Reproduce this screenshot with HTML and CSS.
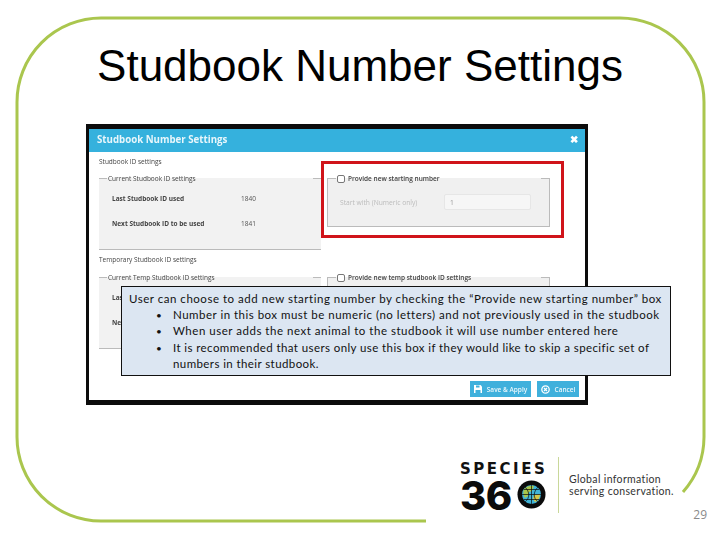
FILE: index.html
```html
<!DOCTYPE html>
<html lang="en">
<head>
<meta charset="utf-8">
<title>Studbook Number Settings</title>
<link rel="stylesheet" href="styles.css">
</head>
<body>
<main class="slide">
  <svg class="frame" width="720" height="540" viewBox="0 0 720 540" aria-hidden="true">
    <path d="M426 521H101A84 84 0 0 1 17 437V102A84 84 0 0 1 101 18H620A84 84 0 0 1 704 102V437A84 84 0 0 1 683 492" fill="none" stroke="#aac64e" stroke-width="3"/>
  </svg>
  <h1 class="title">Studbook Number Settings</h1>
  <section class="dialog">
    <header class="dialog-head"><span>Studbook Number Settings</span><span class="close">✖</span></header>
    <div class="dialog-body">
      <div class="sec-label">Studbook ID settings</div>
      <div class="sec-row">
        <div class="panel">
          <div class="legend"><i></i><span>Current Studbook ID settings</span><i></i></div>
          <div class="data"><b>Last Studbook ID used</b><span>1840</span><b>Next Studbook ID to be used</b><span>1841</span></div>
        </div>
        <div class="panel side">
          <div class="legend"><i></i><em class="check"></em><strong>Provide new starting number</strong><i></i></div>
          <div class="start"><span>Start with (Numeric only)</span><div class="input">1</div></div>
        </div>
      </div>
      <div class="sec-label second">Temporary Studbook ID settings</div>
      <div class="sec-row">
        <div class="panel">
          <div class="legend"><i></i><span>Current Temp Studbook ID settings</span><i></i></div>
          <div class="data"><b>Las</b><span></span><b>Nex</b><span></span></div>
        </div>
        <div class="panel side">
          <div class="legend"><i></i><em class="check"></em><strong>Provide new temp studbook ID settings</strong><i></i></div>
        </div>
      </div>
    </div>
    <div class="actions">
      <span class="btn save"><svg width="8" height="8" viewBox="0 0 8 8"><path d="M0 0h6.500L8 1.500V8H0z" fill="#fff"/><path d="M2 0.500h3.500v2H2zM1.500 5h5v3h-5z" fill="#3fb0dc"/></svg>Save &amp; Apply</span>
      <span class="btn cancel"><svg width="9" height="9" viewBox="0 0 9 9"><circle cx="4.500" cy="4.500" r="3.700" fill="none" stroke="#fff" stroke-width="1.300"/><path d="M3 3l3 3M6 3L3 6" stroke="#fff" stroke-width="1.200"/></svg>Cancel</span>
    </div>
    <div class="highlight"></div>
  </section>
  <aside class="callout">
    <p>User can choose to add new starting number by checking the “Provide new starting number” box</p>
    <ul>
      <li class="snug">Number in this box must be numeric (no letters) and not previously used in the studbook</li>
      <li>When user adds the next animal to the studbook it will use number entered here</li>
      <li class="tight">It is recommended that users only use this box if they would like to skip a specific set of numbers in their studbook.</li>
    </ul>
  </aside>
  <footer class="footer">
    <div class="logo">
      <div class="species">SPECIES</div>
      <div class="mark"><span>36</span>
        <svg width="29" height="29" viewBox="0 0 29 29" aria-hidden="true">
          <circle cx="14.500" cy="14.500" r="14" fill="#0b0b0b"/>
          <circle cx="14.500" cy="14.500" r="9.500" fill="#3fb4d8"/>
          <path d="M7 9c3-3 7-4 10-3l-2 5-3 1-1 4-3 2c-2-3-2-6-1-9z" fill="#a9c64a"/>
          <path d="M17 15l6-1c0 4-2 7-5 8l-2-3z" fill="#d5c94a"/>
          <path d="M5 14.500h19M14.500 5v19M8 7c5 5 5 11 0 15M21 7c-5 5-5 11 0 15M7 9.500h15M7 19.500h15" fill="none" stroke="#0b0b0b" stroke-width=".7"/>
        </svg>
      </div>
    </div>
    <div class="tagline">Global information<br>serving conservation.</div>
    <div class="page">29</div>
  </footer>
</main>
</body>
</html>
```

FILE: styles.css
```css
* { box-sizing: border-box; }
html, body { margin: 0; padding: 0; background: #fff; }
.slide {
  position: relative;
  width: 720px;
  height: 540px;
  overflow: hidden;
  font-family: "Liberation Sans", Arial, sans-serif;
  color: #000;
}
.frame { position: absolute; left: 0; top: 0; }
.title {
  position: relative;
  margin: 0;
  padding-top: 40px;
  height: 124px;
  font-size: 44px;
  line-height: 52px;
  font-weight: 400;
  text-align: center;
}
.dialog {
  position: relative;
  display: flex;
  flex-direction: column;
  width: 502px;
  height: 281px;
  margin-left: 86px;
  background: #fff;
  border: solid #0c0c0c;
  border-width: 5px 3px 5px 3px;
  font-family: "Open Sans", sans-serif;
  font-size: 6.500px;
  color: #444;
}
.dialog-head {
  display: flex;
  align-items: center;
  justify-content: space-between;
  height: 23px;
  padding: 0 7px 3px 8px;
  background: #35b1dd;
  color: #e8f6fb;
  font-size: 9.700px;
  font-weight: 700;
  filter: blur(.4px);
}
.close { font-size: 10px; color: #fff; }
.dialog-body { padding: 0 35px 0 10px; filter: blur(.45px); }
.sec-label { height: 26px; padding-top: 6px; line-height: 8px; }
.sec-label.second { height: 27px; }
.sec-row { display: grid; grid-template-columns: 222px 223px; column-gap: 6px; }
.panel { height: 72px; background: #f2f2f2; border-bottom: 1px solid #bbb; }
.legend {
  display: flex;
  align-items: center;
  justify-content: space-between;
  gap: 1px;
  height: 1px;
  white-space: nowrap;
}
.legend i { flex: 0 0 8px; height: 1px; background: #bbb; }
.legend span { margin-right: auto; line-height: 8px; }
.data {
  display: grid;
  grid-template-columns: 129px 1fr;
  grid-auto-rows: 25px;
  align-items: center;
  padding: 7px 0 0 13px;
  color: #555;
}
.data b { font-weight: 700; color: #444; white-space: nowrap; }
.side { height: 49px; border-left: 1px solid #bbb; border-right: 1px solid #bbb; background: #f0f0f0; }
.sec-row:last-child .side { height: 72px; }
.check {
  flex: none;
  width: 8px;
  height: 8px;
  margin-right: 2px;
  background: #fff;
  border: 1px solid #777;
  border-radius: 2px;
}
.legend strong { margin-right: auto; font-weight: 600; color: #444; }
.start {
  display: flex;
  align-items: center;
  justify-content: space-between;
  padding: 15px 18px 0 12px;
  color: #bbb;
  font-size: 6.700px;
}
.input {
  width: 87px;
  height: 16px;
  padding-left: 5px;
  line-height: 16px;
  color: #999;
  background: #f6f6f6;
  border: 1px solid #e6e6e6;
  border-radius: 2px;
}
.actions {
  display: flex;
  justify-content: flex-end;
  gap: 6px;
  margin-top: auto;
  padding: 0 6px 3px 0;
  filter: blur(.4px);
}
.btn {
  display: flex;
  align-items: center;
  justify-content: center;
  gap: 5px;
  height: 16px;
  background: #3fb0dc;
  color: #eaf7fc;
  font-size: 6.500px;
  font-weight: 600;
}
.save { width: 61px; }
.cancel { width: 42px; }
.highlight {
  position: absolute;
  left: 232px;
  top: 32px;
  width: 243px;
  height: 77px;
  border: 3px solid #d0141a;
}
.callout {
  position: absolute;
  left: 121px;
  top: 286px;
  width: 550px;
  height: 90px;
  padding: 4px 8px 0 7px;
  background: #dce6f2;
  border: 1px solid #111;
  font-family: "Lato", sans-serif;
  font-size: 11.500px;
  line-height: 16.200px;
  letter-spacing: .52px;
  color: #111;
}
.callout p { margin: 0; white-space: nowrap; }
.callout ul { margin: 0; padding: 0 0 0 27px; list-style: none; }
.callout li { display: flex; }
.callout li.snug { letter-spacing: .49px; }
.callout li.tight { letter-spacing: .41px; }
.callout li::before { content: "•"; flex: 0 0 17px; font-size: 10px; }
.footer {
  position: relative;
  display: flex;
  align-items: flex-start;
  height: 135px;
  padding: 52px 0 0 460px;
}
.logo { width: 99px; height: 56px; border-right: 1px solid #c9d89a; flex: none; }
.species {
  font-family: "DejaVu Sans", sans-serif;
  font-weight: 700;
  font-size: 15px;
  line-height: 18px;
  letter-spacing: 2.500px;
  color: #111;
  height: 18px;
  margin-top: 3px;
}
.mark { display: flex; align-items: flex-start; gap: 5px; }
.mark svg { margin-top: 2px; }
.mark span {
  font-family: "Inter", sans-serif;
  font-weight: 800;
  font-size: 40px;
  line-height: 36px;
  letter-spacing: -.5px;
  color: #0b0b0b;
}
.tagline {
  margin: 17px 0 0 10px;
  font-family: "Lato", sans-serif;
  font-size: 10.500px;
  line-height: 11.500px;
  letter-spacing: .35px;
  color: #333;
  white-space: nowrap;
}
.page {
  position: absolute;
  right: 13px;
  bottom: 17px;
  font-family: "Open Sans", sans-serif;
  font-size: 12px;
  color: #8a8a8a;
}
```
